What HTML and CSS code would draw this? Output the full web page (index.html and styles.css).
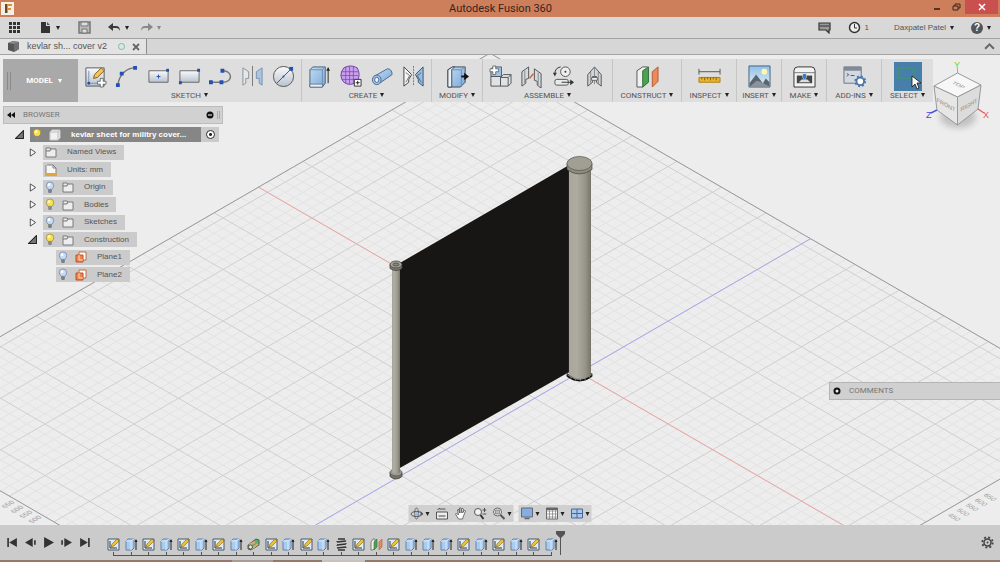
FILE: index.html
```html
<!DOCTYPE html>
<html lang="en">
<head>
<meta charset="utf-8">
<meta name="viewport" content="width=device-width, initial-scale=1">
<title>Autodesk Fusion 360</title>
<link rel="stylesheet" href="styles.css">
</head>
<body>
<svg class="defs" aria-hidden="true">
  <defs>
    <linearGradient id="blue" x1="0" y1="0" x2="1" y2="1"><stop offset="0" stop-color="#c3dcf3"/><stop offset="1" stop-color="#7ba9d8"/></linearGradient>
    <linearGradient id="steel" x1="0" y1="0" x2="0" y2="1"><stop offset="0" stop-color="#fafafb"/><stop offset="1" stop-color="#b9c2cf"/></linearGradient>
    <linearGradient id="rod"><stop offset="0" stop-color="#a9a79b"/><stop offset=".35" stop-color="#aeaca0"/><stop offset=".75" stop-color="#969488"/><stop offset="1" stop-color="#77756b"/></linearGradient>
    <linearGradient id="sky" x1="0" y1="0" x2="0" y2="1"><stop offset="0" stop-color="#8fc0e8"/><stop offset="1" stop-color="#e6eff3"/></linearGradient>
  </defs>
  <symbol id="i-sketch" viewBox="0 0 24 24"><path d="M2 3h19v19H2z" fill="url(#steel)" stroke="#555b63"/><path d="M5 6v13h12" fill="none" stroke="#7b92b4"/><circle cx="5" cy="19" r="1.500" fill="#2450a8"/><path d="M10 14l1-4 7-7 3 3-7 7z" fill="#f3c65b" stroke="#7d5a1d"/><path d="M17 14h3v3h3v3h-3v3h-3v-3h-3v-3h3z" fill="#fff" stroke="#555" stroke-width=".8"/></symbol>
  <symbol id="i-arc" viewBox="0 0 24 24"><path d="M3 21C4 11 11 3 21 3" fill="none" stroke="#777" stroke-width="1.500"/><path d="M1 19h4v4H1zM5 7h4v4H5zM19 1h4v4h-4z" fill="#2450b0"/></symbol>
  <symbol id="i-crect" viewBox="0 0 24 24"><path d="M2 6h20v12H2z" fill="url(#steel)" stroke="#666"/><path d="M20 4h3v3h-3z" fill="#2450b0"/><path d="M12 10v4M10 12h4" stroke="#2450b0"/></symbol>
  <symbol id="i-rect" viewBox="0 0 24 24"><path d="M2 6h20v12H2z" fill="url(#steel)" stroke="#666"/><path d="M20 4h3v3h-3zM1 17h3v3H1z" fill="#2450b0"/></symbol>
  <symbol id="i-slot" viewBox="0 0 24 24"><path d="M2 18h12c12 0 10-12 1-12" fill="none" stroke="#777" stroke-width="1.500"/><path d="M0 16h4v4H0zM11 16h4v4h-4zM12 4h4v4h-4z" fill="#2450b0"/></symbol>
  <symbol id="i-mirror" viewBox="0 0 24 24"><path d="M2 3l6 4v7h-3v5l-3 2z" fill="#e4e7ea" stroke="#8c929a"/><path d="M22 3l-6 4v7h3v5l3 2z" fill="#a9c6e3" stroke="#7b91aa"/><path d="M12 1v21" stroke="#777"/></symbol>
  <symbol id="i-circle" viewBox="0 0 24 24"><circle cx="12" cy="12" r="10.500" fill="url(#steel)" stroke="#555"/><path d="M5 19L19 5" stroke="#555"/><path d="M18 2h4v4h-4z" fill="#2450b0"/><circle cx="12" cy="12" r="1" fill="#2450b0"/></symbol>
  <symbol id="i-extrude" viewBox="0 0 24 24"><path d="M2 5l3-3h13v17l-3 4H2z" fill="url(#blue)" stroke="#4a5f78"/><path d="M2 5h13l3-3M15 5v18" fill="none" stroke="#6c8eb2"/><path d="M2 20h13v3H2z" fill="#eef2f6" stroke="#4a5f78" stroke-width=".7"/><path d="M21 19V5" stroke="#222"/><path d="M19 6l2-4 2 4z" fill="#222"/></symbol>
  <symbol id="i-form" viewBox="0 0 24 24"><path d="M5 3q7-4 14 0 4 7 0 14-7 6-14 1-6-7 0-15z" fill="#c8a0ee" stroke="#6f3fa0"/><path d="M7 2v17M11 1v19M15 1v19M2 7h18M2 11h18M3 15h17" stroke="#8044b8" stroke-width=".8"/><path d="M16 15h7v7h-7z" fill="#fff" stroke="#333"/><path d="M19.500 16.500v4M17.500 18.500h4" stroke="#222"/></symbol>
  <symbol id="i-pipe" viewBox="0 0 24 24"><path d="M3 12L17 4q5 0 5 6L9 19z" fill="url(#blue)" stroke="#4a6890"/><ellipse cx="6" cy="15.500" rx="4.500" ry="5" fill="#a5c5e8" stroke="#4a6890"/><ellipse cx="6" cy="15.500" rx="2.200" ry="2.700" fill="#f0f4f8" stroke="#4a6890"/></symbol>
  <symbol id="i-mirror2" viewBox="0 0 24 24"><path d="M2 2l8 8-3 5v3l-5 4z" fill="#f4f5f6" stroke="#444"/><path d="M22 2l-8 8 3 5v3l5 4z" fill="#94bce4" stroke="#3c536c"/><path d="M12 1v21" stroke="#777" stroke-dasharray="2 1"/><path d="M4 8l4 3-4 7M20 8l-4 3 4 7" fill="none" stroke="#555" stroke-width=".8"/></symbol>
  <symbol id="i-press" viewBox="0 0 24 24"><path d="M2 5l5-3h13v16l-5 5H2z" fill="url(#blue)" stroke="#3d4a5a"/><path d="M2 5l5-3h2L6 5v18H2z" fill="#f0f1f2" stroke="#3d4a5a"/><path d="M6 5h10v18M16 5l4-3" fill="none" stroke="#6c8eb2"/><path d="M16 12h4" stroke="#111" stroke-width="2"/><path d="M19 8l5 4-5 4z" fill="#111"/></symbol>
  <symbol id="i-component" viewBox="0 0 24 24"><path d="M2 12V4l3-2h8v10z" fill="#9fc2e8" stroke="#4a6080"/><path d="M2 12h10v10H2z" fill="#dfe3e8" stroke="#555"/><path d="M12 13l3-3h8v9l-3 3h-8z" fill="#dfe3e8" stroke="#555"/><path d="M12 13h8l3-3M20 13v9" fill="none" stroke="#555"/><path d="M4 1h3v3h3v3H7v3H4V7H1V4h3z" fill="#fff" stroke="#555" stroke-width=".8"/></symbol>
  <symbol id="i-joint" viewBox="0 0 24 24"><path d="M2 7l7-5v12l-3 1v4l-4 3z" fill="#d4d9de" stroke="#555"/><path d="M22 9l-7-5v12l3 1v4l4 3z" fill="#d4d9de" stroke="#555"/><path d="M5 6v13M19 8v13" stroke="#888"/><path d="M10 14l4-5" stroke="#d0562e" stroke-width="1.500"/></symbol>
  <symbol id="i-jorigin" viewBox="0 0 24 24"><circle cx="14" cy="7" r="5" fill="#eee" stroke="#555"/><circle cx="14" cy="7" r="1" fill="#333"/><path d="M3 9q0-6 6-7" fill="none" stroke="#333"/><path d="M1 8h4l-2 4z" fill="#333"/><rect x="3" y="15" width="14" height="6" rx="2" fill="#e8eaec" stroke="#555"/><path d="M10 18h11" stroke="#333"/><path d="M19 15l4 3-4 3z" fill="#333"/></symbol>
  <symbol id="i-rigid" viewBox="0 0 24 24"><path d="M5 22V10l7-8 7 8v12l-5-4v-6h-4v6z" fill="#d0d5db" stroke="#555"/><path d="M12 2v18M8 7v12M16 7v12" stroke="#777" stroke-width=".8"/><path d="M9 13h6v3H9z" fill="#efefef" stroke="#666"/></symbol>
  <symbol id="i-plane" viewBox="0 0 24 24"><path d="M1 6l6-4h5v16l-5 5H1z" fill="#f0f1f1" stroke="#555"/><path d="M7 6l6-4v16l-6 5z" fill="#4ba352" stroke="#356b3a"/><path d="M17 7l6-5v15l-6 6z" fill="#eb8a5a" stroke="#b35c30"/></symbol>
  <symbol id="i-measure" viewBox="0 0 24 24"><path d="M1 7h22M1 4v6M23 4v6" stroke="#555"/><path d="M1 13h22v5H1z" fill="#eab42c" stroke="#b07d12"/><path d="M4 13v2M7 13v3M10 13v2M13 13v3M16 13v2M19 13v3" stroke="#805c10"/></symbol>
  <symbol id="i-image" viewBox="0 0 24 24"><path d="M1 1h22v22H1z" fill="url(#sky)" stroke="#48627b"/><circle cx="17" cy="7" r="3" fill="#fff6b0"/><path d="M1.500 19l7-9 7 9 3-5 4 4v4.500h-21z" fill="#5b6570"/><path d="M2 22.500l7-6 4 1 9.500 5z" fill="#8b949c"/></symbol>
  <symbol id="i-print" viewBox="0 0 24 24"><path d="M1 6q0-4 4-4h14q4 0 4 4v17H1z" fill="#f2f2f2" stroke="#333"/><path d="M1 8h22" stroke="#777"/><path d="M4 11h16v8H4z" fill="#444"/><path d="M6 18l3-3h6l3 3z" fill="#ddd"/><path d="M10 9h4v4l-2 3-2-3z" fill="#2f79c8" stroke="#fff" stroke-width=".5"/></symbol>
  <symbol id="i-addin" viewBox="0 0 24 24"><path d="M1 2h18v17H1z" fill="#d3d9e0" stroke="#6a7482"/><path d="M1 2h18v4H1z" fill="#808b9a"/><path d="M4 9l2 1-2 2M8 11h4" fill="none" stroke="#555"/><circle cx="18" cy="17" r="4" fill="#fff" stroke="#4f78ad" stroke-width="2"/><circle cx="18" cy="17" r="5.200" fill="none" stroke="#4f78ad" stroke-width="2" stroke-dasharray="2 2.080"/></symbol>
  <symbol id="i-select" viewBox="0 0 28 28"><path d="M4 5h16v10H4z" fill="none" stroke="#3f9a5c" stroke-width="1.200"/><path d="M18 13v11l3-3 2 5 2-1-2-5h4z" fill="#fff" stroke="#111" stroke-width=".8"/></symbol>
  <symbol id="t-sketch" viewBox="0 0 13 13"><path d="M1 1h11v11H1z" fill="#dcecf8" stroke="#49586a"/><path d="M3 3v7h7" fill="none" stroke="#333"/><path d="M4 9l1-3 5-5 2 2-5 5z" fill="#f1c232" stroke="#806010" stroke-width=".6"/></symbol>
  <symbol id="t-extrude" viewBox="0 0 13 13"><path d="M1 3l2-2h6v9l-2 2H1z" fill="#a9cbf0" stroke="#5a7da8" stroke-width=".9"/><path d="M1 3h5l3-2M6 3v9" fill="none" stroke="#dcecf9"/><path d="M11 12V2" stroke="#222"/><path d="M9.500 4L11 1l1.500 3z" fill="#222"/></symbol>
  <symbol id="t-pipe" viewBox="0 0 13 13"><path d="M1 7l8-6 3 1v5l-8 5-3-1z" fill="#63ae67" stroke="#44624a"/><path d="M2 7l6-3M4 11l7-5" stroke="#e1a77a" stroke-width="2"/><circle cx="3.500" cy="9" r="2" fill="#eee" stroke="#555"/></symbol>
  <symbol id="t-coil" viewBox="0 0 13 13"><path d="M3 1h7M2 4l9-1M2 7l9-1M2 10l9-1M3 12h7" stroke="#333" stroke-width="1.400" fill="none"/><path d="M2 3v1M11 5v1M2 7v1M11 9v1" stroke="#333"/></symbol>
  <symbol id="t-plane" viewBox="0 0 13 13"><path d="M1 4l2-3h2v9l-2 2H1z" fill="#eee" stroke="#666" stroke-width=".8"/><path d="M4 4l3-3v8l-3 3z" fill="#4ba352" stroke="#356b3a" stroke-width=".6"/><path d="M9 4l3-3v8l-3 3z" fill="#e58a62" stroke="#b35c30" stroke-width=".6"/></symbol>
  <symbol id="b-on" viewBox="0 0 10 14"><path d="M3 9Q1 7 1 5a4 4 0 0 1 8 0q0 2-2 4z" fill="#f9e04c" stroke="#9a8a35" stroke-width=".8"/><path d="M3 9h4v3l-1 1H4l-1-1z" fill="#8a8a8a"/><circle cx="4" cy="4" r="1.500" fill="#fff8c0"/></symbol>
  <symbol id="b-off" viewBox="0 0 10 14"><path d="M3 9Q1 7 1 5a4 4 0 0 1 8 0q0 2-2 4z" fill="#c6daf5" stroke="#6c83a8" stroke-width=".8"/><path d="M3 9h4v3l-1 1H4l-1-1z" fill="#7a8088"/><circle cx="4" cy="4" r="1.500" fill="#fff"/></symbol>
  <symbol id="folder" viewBox="0 0 12 12"><path d="M1 2h4l1 1h5v8H1zM1 5h4l1-2" fill="#ededed" stroke="#707070" stroke-width=".9"/></symbol>
  <symbol id="ruler" viewBox="0 0 12 12"><path d="M2 1h6l3 3v7H1V1" fill="#f6f6f6" stroke="#777" stroke-width=".9"/><path d="M8 1v3h3" fill="none" stroke="#777" stroke-width=".9"/><path d="M0 9h12v3H0z" fill="#e3a72e"/></symbol>
  <symbol id="plane" viewBox="0 0 12 12"><path d="M4 1h7v8H4z" fill="#fff" stroke="#c26a3c"/><path d="M1 4h7v7H1z" fill="#ef8250" stroke="#b9541f"/><path d="M4 4v5h4" fill="none" stroke="#ffd7bf"/></symbol>
  <symbol id="tw-open" viewBox="0 0 8 8"><path d="M7.500.5v7h-7z" fill="#777" stroke="#222" stroke-width=".9"/></symbol>
  <symbol id="tw-shut" viewBox="0 0 8 10"><path d="M1.500 1v8L7 5.500v-1z" fill="#f5f5f5" stroke="#333" stroke-width=".9"/></symbol>
</svg>

<header class="titlebar">
  <svg class="titlebar__logo" viewBox="0 0 13 13" aria-hidden="true"><path d="M0 0h13v13H0z" fill="#f4efe6"/><path d="M4 2h7v2H7v2h3v2H7v3H4z" fill="#e0902c"/><path d="M4 2h2v9H4z" fill="#6b4a1e"/></svg>
  <h1 class="titlebar__name">Autodesk Fusion 360</h1>
  <div class="titlebar__controls">
    <button class="win" aria-label="Minimize"><svg viewBox="0 0 10 10"><path d="M2 7h6" stroke="#2b1a12" stroke-width="1.500"/></svg></button>
    <button class="win" aria-label="Restore"><svg viewBox="0 0 10 10"><path d="M2 4h5v4H2zM4 4V2h5v4H7" fill="none" stroke="#3b241a"/></svg></button>
    <button class="win win--close" aria-label="Close"><svg viewBox="0 0 10 10"><path d="M2 2l6 6M8 2L2 8" stroke="#fff" stroke-width="1.500"/></svg></button>
  </div>
</header>

<nav class="appbar" aria-label="Application">
  <button class="plain" aria-label="Data panel"><svg class="s13" viewBox="0 0 13 13"><path d="M1 1h3v3H1zM5 1h3v3H5zM9 1h3v3H9zM1 5h3v3H1zM5 5h3v3H5zM9 5h3v3H9zM1 9h3v3H1zM5 9h3v3H5zM9 9h3v3H9z" fill="#333"/></svg></button>
  <button class="plain appbar__file" aria-label="File"><svg class="s13" viewBox="0 0 13 13"><path d="M2 1h5v4h4v7H2z" fill="#333"/><path d="M8 1l3 3H8z" fill="#555"/></svg><span class="caret"></span></button>
  <button class="plain appbar__save" aria-label="Save"><svg class="s13" viewBox="0 0 13 13"><path d="M1 1h11v11H1z" fill="#bbb" stroke="#777" stroke-width="1.500"/><path d="M3 1h7v4H3zM4 8h5v4H4z" fill="#ddd" stroke="#777"/></svg></button>
  <button class="plain appbar__undo" aria-label="Undo"><svg class="s13" viewBox="0 0 13 13"><path d="M0 6l5-4v3h3q4 0 4 5-1-3-4-3H5v3z" fill="#3a3a3a"/></svg><span class="caret"></span></button>
  <button class="plain appbar__redo" aria-label="Redo"><svg class="s13" viewBox="0 0 13 13"><path d="M13 6L8 2v3H5q-4 0-4 5 1-3 4-3h3v3z" fill="#888"/></svg><span class="caret caret--dim"></span></button>
  <div class="appbar__right">
    <button class="plain" aria-label="Comments"><svg class="s13" viewBox="0 0 13 13"><path d="M1 2h11v7h-1v3L8 9H1z" fill="#999" stroke="#333" stroke-width="1.200"/><path d="M2 5h9" stroke="#333"/></svg></button>
    <button class="plain" aria-label="Job status, 1"><svg class="s13" viewBox="0 0 13 13"><circle cx="6.500" cy="6.500" r="5" fill="#eee" stroke="#333" stroke-width="1.500"/><path d="M6.500 3v4H9" fill="none" stroke="#333"/></svg><span>1</span></button>
    <button class="plain">Daxpatel Patel<span class="caret"></span></button>
    <button class="plain" aria-label="Help"><span class="help">?</span><span class="caret"></span></button>
  </div>
</nav>

<div class="tabs">
  <div class="tab">
    <svg class="s13" viewBox="0 0 13 13" aria-hidden="true"><path d="M1 3l5-2 6 1v7l-5 3-6-2z" fill="#555"/><path d="M1 3l6 1 5-2-6-1z" fill="#8a8a8a"/><path d="M7 4l5-2v7l-5 3z" fill="#6f6f6f"/></svg>
    <span class="tab__name">kevlar sh... cover v2</span>
    <span class="tab__state"></span>
    <button class="plain" aria-label="Close tab"><svg class="s8" viewBox="0 0 8 8"><path d="M1 1l6 6M7 1L1 7" stroke="#666" stroke-width="1.800"/></svg></button>
  </div>
  <button class="plain tabs__fold" aria-label="Collapse"><svg class="s10" viewBox="0 0 10 10"><path d="M1 7l4-4 4 4" fill="none" stroke="#666" stroke-width="1.800"/></svg></button>
</div>

<main class="workspace">
  <svg class="scene" viewBox="0 54 1000 471" preserveAspectRatio="xMidYMid slice" role="img" aria-label="Model of a sheet held between two rods">
    <path id="grid-minor" class="grid-minor"/>
    <path id="grid-major" class="grid-major"/>
    <path id="grid-edge" class="grid-edge"/>
    <g id="grid-numbers" class="grid-numbers"></g>
    <path d="M259 187L882 547" stroke="#f0a6a6"/>
    <path d="M811 238L187 599" stroke="#a9a9ee"/>
    <path d="M399 263L570 164V371L399 468z" fill="#181614"/>
    <path d="M567 373q12 10 25 0v3q-12 9-25 0z" fill="#8e8c80" stroke="#222" stroke-width=".8"/>
    <path d="M567 375q12 10 25 0" fill="none" stroke="#111" stroke-width="1.500" stroke-dasharray="4 1"/>
    <path d="M569 165h22v209q-11 9-22 0z" fill="url(#rod)"/>
    <path d="M568.500 165v207" stroke="#222"/>
    <path d="M567 163v6q12 9 25 0v-6z" fill="#8e8c80" stroke="#444" stroke-width=".7"/>
    <ellipse cx="579.500" cy="163" rx="12.500" ry="7" fill="#a19f93" stroke="#55534b" stroke-width=".7"/>
    <path d="M392 268h8v202h-8z" fill="url(#rod)"/>
    <path d="M390 264v4q6 4 12 0v-4z" fill="#807e73" stroke="#333" stroke-width=".7"/>
    <ellipse cx="396" cy="264" rx="6" ry="3.500" fill="#a5a397" stroke="#333" stroke-width=".7"/>
    <ellipse cx="396" cy="264" rx="3" ry="1.500" fill="#8a887c" stroke="#333" stroke-width=".6"/>
    <path d="M390 472v4q6 5 12 0v-4q-6 4-12 0z" fill="#77756b" stroke="#333" stroke-width=".7"/>
    <ellipse cx="396" cy="472" rx="6" ry="3.500" fill="#9b998e" stroke="#444" stroke-width=".6"/>
    <path d="M392 466h8v6q-4 2-8 0z" fill="url(#rod)"/>
  </svg>

  <div class="toolbar" role="toolbar" aria-label="Model tools">
    <button class="mode">MODEL<span class="caret caret--light"></span></button>
    <div class="group group--7">
      <div class="group__icons">
        <button class="tool" aria-label="Create sketch"><svg><use href="#i-sketch"/></svg></button>
        <button class="tool" aria-label="Arc"><svg><use href="#i-arc"/></svg></button>
        <button class="tool" aria-label="Center rectangle"><svg><use href="#i-crect"/></svg></button>
        <button class="tool" aria-label="Rectangle"><svg><use href="#i-rect"/></svg></button>
        <button class="tool" aria-label="Line"><svg><use href="#i-slot"/></svg></button>
        <button class="tool" aria-label="Mirror sketch"><svg><use href="#i-mirror"/></svg></button>
        <button class="tool" aria-label="Circle"><svg><use href="#i-circle"/></svg></button>
      </div>
      <button class="group__menu">SKETCH<span class="caret"></span></button>
    </div>
    <div class="group group--4">
      <div class="group__icons">
        <button class="tool" aria-label="Extrude"><svg><use href="#i-extrude"/></svg></button>
        <button class="tool" aria-label="Create form"><svg><use href="#i-form"/></svg></button>
        <button class="tool" aria-label="Pipe"><svg><use href="#i-pipe"/></svg></button>
        <button class="tool" aria-label="Mirror"><svg><use href="#i-mirror2"/></svg></button>
      </div>
      <button class="group__menu">CREATE<span class="caret"></span></button>
    </div>
    <div class="group group--1">
      <div class="group__icons"><button class="tool" aria-label="Press pull"><svg><use href="#i-press"/></svg></button></div>
      <button class="group__menu">MODIFY<span class="caret"></span></button>
    </div>
    <div class="group group--4">
      <div class="group__icons">
        <button class="tool" aria-label="New component"><svg><use href="#i-component"/></svg></button>
        <button class="tool" aria-label="Joint"><svg><use href="#i-joint"/></svg></button>
        <button class="tool" aria-label="Joint origin"><svg><use href="#i-jorigin"/></svg></button>
        <button class="tool" aria-label="Rigid group"><svg><use href="#i-rigid"/></svg></button>
      </div>
      <button class="group__menu">ASSEMBLE<span class="caret"></span></button>
    </div>
    <div class="group group--long">
      <div class="group__icons"><button class="tool" aria-label="Offset plane"><svg><use href="#i-plane"/></svg></button></div>
      <button class="group__menu">CONSTRUCT<span class="caret"></span></button>
    </div>
    <div class="group group--mid">
      <div class="group__icons"><button class="tool" aria-label="Measure"><svg><use href="#i-measure"/></svg></button></div>
      <button class="group__menu">INSPECT<span class="caret"></span></button>
    </div>
    <div class="group group--short">
      <div class="group__icons"><button class="tool" aria-label="Insert image"><svg><use href="#i-image"/></svg></button></div>
      <button class="group__menu">INSERT<span class="caret"></span></button>
    </div>
    <div class="group group--short">
      <div class="group__icons"><button class="tool" aria-label="3D print"><svg><use href="#i-print"/></svg></button></div>
      <button class="group__menu">MAKE<span class="caret"></span></button>
    </div>
    <div class="group group--mid">
      <div class="group__icons"><button class="tool" aria-label="Scripts and add-ins"><svg><use href="#i-addin"/></svg></button></div>
      <button class="group__menu">ADD-INS<span class="caret"></span></button>
    </div>
    <div class="group group--1 group--last">
      <div class="group__icons"><button class="tool tool--active" aria-label="Select"><svg><use href="#i-select"/></svg></button></div>
      <button class="group__menu">SELECT<span class="caret"></span></button>
    </div>
  </div>

  <svg class="cube" viewBox="924 58 68 76" role="img" aria-label="View cube">
    <ellipse cx="958" cy="116" rx="18" ry="11" fill="#000" opacity=".18" class="cube__shadow"/>
    <path d="M957.500 72V67" stroke="#5fdc5f"/><path d="M937 109l-6 3" stroke="#5353d8" stroke-width="1.500"/><path d="M978 108l6 4" stroke="#ef5b5b" stroke-width="1.500"/>
    <path d="M957.500 72L981 84 957.500 96 934 85z" fill="#f7f7f7" stroke="#999"/>
    <path d="M934 85l23.500 11v28L937 109z" fill="#e6e6e6" stroke="#999"/>
    <path d="M981 84l-23.500 12v28L978 108z" fill="#dcdcdc" stroke="#999"/>
    <g class="cube__faces">
      <text transform="matrix(.9 .45 -.7 .5 957 85)" text-anchor="middle">TOP</text>
      <text transform="matrix(.9 .5 0 1 946 106)" text-anchor="middle">FRONT</text>
      <text transform="matrix(.9 -.5 0 1 969 106)" text-anchor="middle">RIGHT</text>
    </g>
    <g class="cube__axes"><text x="954" y="67" fill="#55dd55">Y</text><text x="926" y="117" fill="#4646d8">Z</text><text x="983" y="117" fill="#f05050">X</text></g>
  </svg>

  <section class="browser" aria-label="Browser">
    <header class="browser__head">
      <svg class="s8" viewBox="0 0 8 8" aria-hidden="true"><path d="M4 1v6L0 4zM8 1v6L4 4z" fill="#111"/></svg>
      <h2 class="browser__title">BROWSER</h2>
      <button class="plain" aria-label="Hide browser"><svg class="s8" viewBox="0 0 8 8"><circle cx="4" cy="4" r="3.500" fill="#111"/><path d="M2 4h4" stroke="#fff"/></svg></button>
      <span class="browser__grip"></span>
    </header>
    <ul class="tree">
      <li class="row row--root"><svg class="row__tw"><use href="#tw-open"/></svg><div class="row__root"><div class="row__body row__body--root"><svg class="bulb"><use href="#b-on"/></svg><svg class="s12" viewBox="0 0 12 12"><path d="M1 3l2-2h8v8l-2 2H1z" fill="#f1f1f1" stroke="#ccc"/><path d="M1 3h8l2-2M9 3v8" fill="none" stroke="#bbb"/></svg><span class="row__text">kevlar sheet for militry cover...</span></div><label class="pick"><input type="radio" class="pick__dot" checked aria-label="Activate component"></label></div></li>
      <li class="row"><svg class="row__tw"><use href="#tw-shut"/></svg><div class="row__body"><svg class="s12"><use href="#folder"/></svg><span class="row__text">Named Views</span></div></li>
      <li class="row"><span class="row__tw"></span><div class="row__body"><svg class="s12"><use href="#ruler"/></svg><span class="row__text">Units: mm</span></div></li>
      <li class="row"><svg class="row__tw"><use href="#tw-shut"/></svg><div class="row__body"><svg class="bulb"><use href="#b-off"/></svg><svg class="s12"><use href="#folder"/></svg><span class="row__text">Origin</span></div></li>
      <li class="row"><svg class="row__tw"><use href="#tw-shut"/></svg><div class="row__body"><svg class="bulb"><use href="#b-on"/></svg><svg class="s12"><use href="#folder"/></svg><span class="row__text">Bodies</span></div></li>
      <li class="row"><svg class="row__tw"><use href="#tw-shut"/></svg><div class="row__body"><svg class="bulb"><use href="#b-off"/></svg><svg class="s12"><use href="#folder"/></svg><span class="row__text">Sketches</span></div></li>
      <li class="row"><svg class="row__tw"><use href="#tw-open"/></svg><div class="row__body"><svg class="bulb"><use href="#b-on"/></svg><svg class="s12"><use href="#folder"/></svg><span class="row__text">Construction</span></div></li>
      <li class="row row--leaf"><span class="row__tw"></span><div class="row__body"><svg class="bulb"><use href="#b-off"/></svg><svg class="s12"><use href="#plane"/></svg><span class="row__text">Plane1</span></div></li>
      <li class="row row--leaf"><span class="row__tw"></span><div class="row__body"><svg class="bulb"><use href="#b-off"/></svg><svg class="s12"><use href="#plane"/></svg><span class="row__text">Plane2</span></div></li>
    </ul>
  </section>

  <button class="comments"><svg class="s8" viewBox="0 0 8 8" aria-hidden="true"><circle cx="4" cy="4" r="2.500" fill="#eee" stroke="#111" stroke-width="2"/></svg>COMMENTS</button>

  <div class="viewbar" role="toolbar" aria-label="View">
    <div class="viewbar__set">
      <button class="plain" aria-label="Orbit"><svg class="s13" viewBox="0 0 13 13"><ellipse cx="6" cy="7" rx="5.500" ry="2.500" fill="none" stroke="#555"/><ellipse cx="6" cy="6.500" rx="2" ry="5.500" fill="none" stroke="#555" stroke-width=".8"/><circle cx="6" cy="7" r="2" fill="#9dbde4"/><path d="M10 4l3 3-3 2z" fill="#555"/></svg><span class="caret"></span></button>
      <button class="plain" aria-label="Look at"><svg class="s13" viewBox="0 0 13 13"><path d="M1 5h11v7H1z" fill="#eee" stroke="#555"/><path d="M3 8h7v2H3z" fill="#999"/><path d="M2 3l2-2v1h6" fill="none" stroke="#555"/></svg></button>
      <button class="plain" aria-label="Pan"><svg class="s13" viewBox="0 0 13 13"><path d="M4 12L1 7l1-1 2 2-1-5 1-1 1 4V1h1.500v5L7.500 1 9 2 8 6l2-3 1 1-2 5-1 3z" fill="#fff" stroke="#555" stroke-width=".8"/></svg></button>
      <button class="plain" aria-label="Zoom"><svg class="s13" viewBox="0 0 13 13"><circle cx="4.500" cy="5" r="3.500" fill="#f2f2f2" stroke="#555"/><path d="M7 8l3 4" stroke="#333" stroke-width="2"/><path d="M9 3h4M11 1v4M9 7h4" stroke="#333" stroke-width=".8"/></svg></button>
      <button class="plain" aria-label="Fit"><svg class="s13" viewBox="0 0 13 13"><circle cx="5" cy="5" r="4" fill="#f2f2f2" stroke="#666"/><path d="M3 3h4v4H3z" fill="#bbb" stroke="#777" stroke-width=".7"/><path d="M8 8l4 4" stroke="#555" stroke-width="2"/></svg><span class="caret"></span></button>
    </div>
    <div class="viewbar__set">
      <button class="plain" aria-label="Display settings"><svg class="s13" viewBox="0 0 13 13"><path d="M1 1h11v9H1z" fill="#86aee0" stroke="#667"/><path d="M4 11.500h5" stroke="#666" stroke-width="1.500"/></svg><span class="caret"></span></button>
      <button class="plain" aria-label="Grid settings"><svg class="s13" viewBox="0 0 13 13"><path d="M1 1h11v11H1z" fill="#fff" stroke="#666"/><path d="M4 1v11M7 1v11M10 1v11M1 4h11M1 7h11M1 10h11" stroke="#888" stroke-width=".8"/><path d="M1 1h11v2H1z" fill="#666"/></svg><span class="caret"></span></button>
      <button class="plain" aria-label="Viewports"><svg class="s13" viewBox="0 0 13 13"><path d="M1 2h11v9H1z" fill="#a9c6ec" stroke="#47679a"/><path d="M6.500 2v9M1 6.500h11" stroke="#47679a"/></svg><span class="caret"></span></button>
    </div>
  </div>
</main>

<footer class="timeline">
  <div class="play">
    <button class="plain" aria-label="Go to start"><svg class="s10" viewBox="0 0 10 10"><path d="M1 1v8" stroke="#333" stroke-width="1.500"/><path d="M9 1v8L2 5z" fill="#333"/></svg></button>
    <button class="plain" aria-label="Step back"><svg class="s10" viewBox="0 0 10 10"><path d="M7 1v8L0 5z" fill="#333"/><path d="M9 3v4" stroke="#333" stroke-width="1.500"/></svg></button>
    <button class="plain" aria-label="Play"><svg class="s10" viewBox="0 0 10 10"><path d="M1 0v10l9-5z" fill="#333"/></svg></button>
    <button class="plain" aria-label="Step forward"><svg class="s10" viewBox="0 0 10 10"><path d="M3 1v8l7-4z" fill="#333"/><path d="M1 3v4" stroke="#333" stroke-width="1.500"/></svg></button>
    <button class="plain" aria-label="Go to end"><svg class="s10" viewBox="0 0 10 10"><path d="M9 1v8" stroke="#333" stroke-width="1.500"/><path d="M1 1v8l7-4z" fill="#333"/></svg></button>
  </div>
  <ol class="steps">
    <li><svg><use href="#t-sketch"/></svg></li><li><svg><use href="#t-extrude"/></svg></li>
    <li><svg><use href="#t-sketch"/></svg></li><li><svg><use href="#t-extrude"/></svg></li>
    <li><svg><use href="#t-sketch"/></svg></li><li><svg><use href="#t-extrude"/></svg></li>
    <li><svg><use href="#t-sketch"/></svg></li><li><svg><use href="#t-extrude"/></svg></li>
    <li><svg><use href="#t-pipe"/></svg></li>
    <li><svg><use href="#t-sketch"/></svg></li><li><svg><use href="#t-extrude"/></svg></li>
    <li><svg><use href="#t-sketch"/></svg></li><li><svg><use href="#t-extrude"/></svg></li>
    <li><svg><use href="#t-coil"/></svg></li>
    <li><svg><use href="#t-sketch"/></svg></li><li><svg><use href="#t-plane"/></svg></li>
    <li><svg><use href="#t-sketch"/></svg></li><li><svg><use href="#t-extrude"/></svg></li>
    <li><svg><use href="#t-extrude"/></svg></li><li><svg><use href="#t-extrude"/></svg></li>
    <li><svg><use href="#t-sketch"/></svg></li><li><svg><use href="#t-extrude"/></svg></li>
    <li><svg><use href="#t-sketch"/></svg></li><li><svg><use href="#t-extrude"/></svg></li>
    <li><svg><use href="#t-sketch"/></svg></li><li><svg><use href="#t-extrude"/></svg></li>
  </ol>
  <svg class="marker" viewBox="0 0 9 24" aria-hidden="true"><path d="M0 0h9v3L5 7v17H4V7L0 3z" fill="#555"/></svg>
  <button class="plain timeline__gear" aria-label="Timeline settings"><svg class="s13" viewBox="0 0 13 13"><circle cx="6.500" cy="6.500" r="3.500" fill="none" stroke="#444" stroke-width="1.500"/><circle cx="6.500" cy="6.500" r="5.200" fill="none" stroke="#444" stroke-width="1.800" stroke-dasharray="2 2.084"/><circle cx="6.500" cy="6.500" r="1" fill="#444"/></svg></button>
</footer>
<div class="desktop-edge"></div>
<script src="script.js"></script>
</body>
</html>
```

FILE: styles.css
```css
* { box-sizing: border-box; }
body {
  margin: 0;
  min-height: 100vh;
  display: flex;
  flex-direction: column;
  overflow: hidden;
  background: #ededed;
  color: #555;
  font: 8px/10px "Liberation Sans", Arial, sans-serif;
}
button { font: inherit; color: inherit; border: 0; margin: 0; padding: 0; background: none; }
h1, h2, ul, ol { margin: 0; padding: 0; font: inherit; list-style: none; }
svg { display: block; flex: none; }
.defs { position: absolute; width: 0; height: 0; }
.s8 { width: 8px; height: 8px; }
.s10 { width: 11px; height: 11px; }
.s12 { width: 12px; height: 12px; }
.s13 { width: 13px; height: 13px; }
.plain { display: inline-flex; align-items: center; gap: 3px; }
.caret {
  display: inline-block;
  border: 2px solid transparent;
  border-top: 4px solid #222;
  border-bottom: 0;
}
.caret--dim { border-top-color: #888; }
.caret--light { border-top-color: #fff; }

.titlebar {
  display: grid;
  grid-template-columns: 1fr auto 1fr;
  align-items: center;
  height: 17px;
  padding-left: 1px;
  background: #cd7f5c;
}
.titlebar__logo { width: 13px; height: 13px; }
.titlebar__name { color: #35251e; font: 11px/16px Roboto, "Noto Sans", sans-serif; }
.titlebar__controls { display: flex; justify-content: flex-end; align-self: start; padding-right: 2px; }
.win { display: grid; place-items: center; width: 19px; height: 14px; }
.win svg { width: 10px; height: 10px; }
.win--close { width: 33px; background: #c9504f; }

.appbar {
  display: flex;
  align-items: center;
  height: 22px;
  padding: 0 9px 0 8px;
  border-bottom: 1px solid #a3a3a3;
  background: #d8d8d8;
}
.appbar .plain { gap: 4px; }
.appbar__file { margin-left: 18px; }
.appbar__save { margin-left: 18px; }
.appbar__undo { margin-left: 17px; }
.appbar__redo { margin-left: 11px; }
.appbar__right { display: flex; align-items: center; gap: 17px; margin-left: auto; }
.appbar__right .plain:nth-child(3) { margin-left: 8px; }
.help {
  width: 12px;
  border-radius: 6px;
  background: #555;
  color: #fff;
  font-size: 10px;
  font-weight: bold;
  line-height: 12px;
  text-align: center;
}

.tabs {
  display: flex;
  align-items: center;
  justify-content: space-between;
  height: 16px;
  padding-right: 5px;
  border-bottom: 1px solid #a3a3a3;
  background: #d6d6d6;
}
.tab {
  display: flex;
  align-items: center;
  height: 15px;
  padding: 0 6px 0 7px;
  border-right: 1px solid #8d8d8d;
  background: #e3e3e3;
}
.tab__name { margin-left: 7px; font-size: 9px; line-height: 15px; }
.tab__state { width: 7px; height: 7px; margin: 0 7px 0 11px; border: 1px solid #6cc5a0; border-radius: 50%; }

.workspace { position: relative; flex: 1; padding: 4px 0 0 3px; }
.scene { position: absolute; inset: 0; width: 100%; height: 100%; fill: none; }
.grid-minor { stroke: #e3e3e3; stroke-width: 1; }
.grid-major { stroke: #cfcfcf; stroke-width: 1; }
.grid-edge { stroke: #979797; stroke-width: 1; }
.grid-numbers { fill: #999; font-size: 7px; }

.toolbar { position: relative; display: flex; width: max-content; background: #dedede; }
.mode {
  display: flex;
  align-items: center;
  justify-content: center;
  gap: 5px;
  width: 75px;
  padding-left: 7px;
  background: linear-gradient(90deg, #a9a9a9 4px, #8a8a8a 4px 5px, #a9a9a9 5px 7px, #8a8a8a 7px 8px, #a9a9a9 8px);
  background-size: 100% 18px;
  background-repeat: no-repeat;
  background-position: 0 50%;
  background-color: #a9a9a9;
  color: #fff;
  font: bold 8px/10px Roboto, sans-serif;
}
.group { display: flex; flex-direction: column; width: 51px; padding: 3px 6px 1px; border-right: 1px solid #c6c6c6; }
.group--7 { width: 224px; }
.group--4 { width: 130px; }
.group--long { width: 69px; }
.group--mid { width: 55px; }
.group--short { width: 45px; }
.group--last { border-right: 0; }
.group__icons { display: flex; align-items: center; justify-content: space-between; height: 29px; }
.group__icons > :only-child { margin: 0 auto; }
.tool, .tool svg { width: 23px; height: 23px; }
.tool--active { width: 28px; height: 29px; background: #477fab; }
.tool--active svg { width: 28px; height: 28px; }
.group__menu { align-self: center; white-space: nowrap; font: 8px/10px Roboto, sans-serif; }
.group__menu .caret { margin-left: 3px; vertical-align: 1px; }

.cube { position: absolute; top: 4px; right: 8px; width: 68px; height: 76px; }
.cube__shadow { filter: blur(3px); }
.cube__faces { fill: #888; font-size: 6px; }
.cube__axes { font-size: 9px; }

.browser { position: relative; width: 220px; margin-top: 4px; }
.browser__head {
  display: flex;
  align-items: center;
  height: 18px;
  padding: 0 2px 0 3px;
  border: 1px solid #bcbcbc;
  background: #d1d1d1;
}
.browser__title { margin: 0 auto 0 8px; color: #777; font: 8px/10px Roboto, sans-serif; }
.browser__grip { width: 3px; height: 8px; margin-left: 3px; border: 1px solid #aaa; border-width: 0 1px; }
.tree { display: flex; flex-direction: column; justify-content: space-between; height: 155px; margin-top: 3px; }
.row { display: flex; align-items: center; height: 15px; padding-left: 25px; }
.row--root { padding: 0 4px 0 12px; }
.row--leaf { padding-left: 38px; }
.row__tw { flex: none; width: 9px; height: 9px; margin-right: 6px; }
.row__body { display: flex; align-items: center; height: 15px; padding: 0 8px 0 1px; background: #cbcbcb; }
.row__root { display: flex; flex: 1; height: 15px; background: #cbcbcb; }
.row__body--root { flex: 1; padding-right: 0; background: #868686; color: #fff; font-weight: bold; }
.bulb { width: 10px; height: 13px; margin: 0 4px 0 1px; }
.row__body .s12 { margin-left: 1px; }
.bulb + .s12 { margin-left: 3px; }
.row__text { margin-left: 10px; white-space: nowrap; }
.pick { display: grid; place-items: center; width: 18px; }
.pick__dot {
  appearance: none;
  width: 9px;
  height: 9px;
  margin: 0;
  border: 1px solid #333;
  border-radius: 50%;
  background: radial-gradient(#222 0 1px, #fff 2px);
}

.comments {
  position: absolute;
  right: 0;
  bottom: 125px;
  display: flex;
  align-items: center;
  gap: 8px;
  width: 171px;
  height: 18px;
  padding-left: 3px;
  border: 1px solid #b5b5b5;
  border-right: 0;
  background: #d0d0d0;
  color: #777;
  font: 8px/10px Roboto, sans-serif;
}
.viewbar { position: absolute; bottom: 3px; left: 50%; display: flex; gap: 5px; transform: translateX(-50%); }
.viewbar__set { display: flex; align-items: center; gap: 6px; height: 17px; padding: 0 2px; background: #d0d0d0; }
.viewbar .plain { gap: 2px; }

.timeline {
  position: relative;
  display: flex;
  align-items: center;
  height: 35px;
  padding: 0 6px 0 7px;
  background: #cbcbcb;
}
.play { display: flex; gap: 7px; }
.steps {
  display: flex;
  flex: 0 0 451px;
  justify-content: space-between;
  align-self: flex-end;
  margin: 0 0 4px 17px;
  background: linear-gradient(#555, #555) 6px 100% / 439px 1px no-repeat;
}
.steps li { padding-bottom: 5px; background: linear-gradient(#555, #555) 6px 100% / 1px 4px no-repeat; }
.steps svg { width: 13px; height: 13px; }
.marker { width: 9px; height: 24px; margin-left: -2px; }
.timeline__gear { margin-left: auto; }
.desktop-edge {
  height: 2px;
  background: linear-gradient(90deg, #95786b 0 232px, #a99a93 232px 273px, #95786b 273px 322px, #c9c1bd 322px 365px, #95786b 365px);
}
```

FILE: script.js
```js
// Ground grid in lattice units: a runs along the red axis, b along the blue one.
const origin = { x: 579, y: 372 };
const step = { x: 44.5, y: 25.75 };
const span = { a: [-7.2, 6.8], b: [-8.8, 5.2] };

const at = (a, b) =>
  `${(origin.x + (a + b) * step.x).toFixed(1)} ${(origin.y + (a - b) * step.y).toFixed(1)}`;
const alongA = b => `M${at(span.a[0], b)}L${at(span.a[1], b)}`;
const alongB = a => `M${at(a, span.b[0])}L${at(a, span.b[1])}`;

let minor = "";
let major = "";
const divisions = 5;
for (let i = Math.ceil(span.b[0] * divisions); i <= span.b[1] * divisions; i++) {
  if (i % divisions) minor += alongA(i / divisions); else major += alongA(i / divisions);
}
for (let i = Math.ceil(span.a[0] * divisions); i <= span.a[1] * divisions; i++) {
  if (i % divisions) minor += alongB(i / divisions); else major += alongB(i / divisions);
}
document.getElementById("grid-minor").setAttribute("d", minor);
document.getElementById("grid-major").setAttribute("d", major);
document.getElementById("grid-edge").setAttribute("d",
  alongA(span.b[0]) + alongA(span.b[1]) + alongB(span.a[0]) + alongB(span.a[1]));

// Ruler numbers outside the two near edges, lying in the ground plane.
const numbers = document.getElementById("grid-numbers");
const addNumber = (label, plane, x, y) => {
  const text = document.createElementNS("http://www.w3.org/2000/svg", "text");
  text.setAttribute("transform", `matrix(${plane} ${x} ${y})`);
  text.textContent = label;
  numbers.append(text);
};
for (let i = 0; i < 4; i++) addNumber(650 - i * 50, ".86 -.5 .86 .5", 5 + i * 9, 508 + i * 5);
for (let i = 0; i < 5; i++) addNumber(650 - i * 50, ".86 .5 -.86 .5", 983 - i * 9, 495 + i * 5);
```
